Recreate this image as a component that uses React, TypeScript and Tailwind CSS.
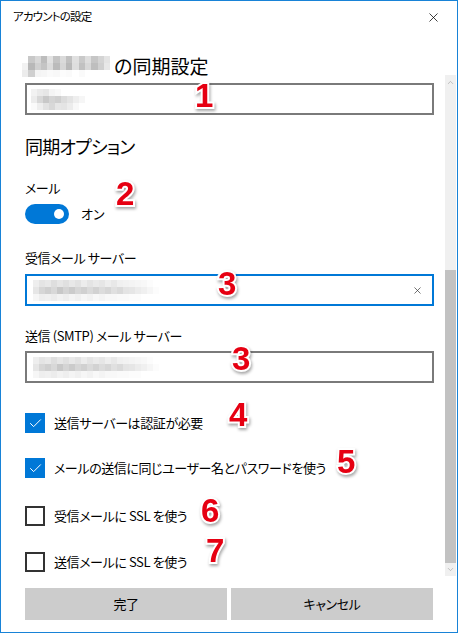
import { X, Check, ChevronUp, ChevronDown } from 'lucide-react';

const font = { fontFamily: '"Segoe UI", "Noto Sans CJK JP", "Noto Sans", sans-serif' };

// pixelated blur standing in for the hidden account text
function Mosaic({ cells, size = 6 }: { cells: string[][]; size?: number }) {
  return (
    <div className="flex flex-col blur-[0.6px]">
      {cells.map((row, i) => (
        <div key={i} className="flex">
          {row.map((c, j) => (
            <div key={j} style={{ backgroundColor: c, width: size, height: 7 }} />
          ))}
        </div>
      ))}
    </div>
  );
}

const headCells = [
  ['#fff', '#c8c8c8', '#d8d8d8', '#bdbdbd', '#e2e2e2', '#c4c4c4', '#dadada', '#c0c0c0', '#e0e0e0', '#c9c9c9', '#dedede', '#c6c6c6', '#d4d4d4', '#e4e4e4'],
  ['#f2f2f2', '#b8b8b8', '#d0d0d0', '#c4c4c4', '#dcdcdc', '#bbbbbb', '#d6d6d6', '#b9b9b9', '#dedede', '#c1c1c1', '#d8d8d8', '#bebebe', '#d0d0d0', '#e8e8e8'],
  ['#ececec', '#cfcfcf', '#f4f4f4', '#f6f6f6', '#fafafa', '#f8f8f8', '#fcfcfc', '#fafafa', '#fff', '#fafafa', '#fff', '#fff', '#fff', '#fff'],
];

const input1Cells = [
  ['#f2f2f2', '#eaeaea', '#e6e6e6', '#f4f4f4', '#f8f8f8', '#fff', '#fff', '#fff', '#fff', '#fff', '#fff'],
  ['#ececec', '#d8d8d8', '#c8c8c8', '#d4d4d4', '#cfcfcf', '#dcdcdc', '#e4e4e4', '#eeeeee', '#f6f6f6', '#fff', '#fff'],
  ['#fafafa', '#eeeeee', '#e2e2e2', '#d8d8d8', '#e6e6e6', '#e4e4e4', '#ececec', '#f8f8f8', '#fff', '#fff', '#fff'],
];

const serverCells = [
  ['#eeeeee', '#e4e4e4', '#e8e8e8', '#dedede', '#e6e6e6', '#e0e0e0', '#e8e8e8', '#e2e2e2', '#ececec', '#e4e4e4', '#eaeaea', '#e6e6e6', '#eeeeee', '#e8e8e8', '#f0f0f0', '#f2f2f2', '#f4f4f4', '#f6f6f6', '#f8f8f8', '#fcfcfc', '#fff'],
  ['#e6e6e6', '#d6d6d6', '#cfcfcf', '#d8d8d8', '#c8c8c8', '#d4d4d4', '#cbcbcb', '#d6d6d6', '#d0d0d0', '#dadada', '#d2d2d2', '#dcdcdc', '#d6d6d6', '#e0e0e0', '#dadada', '#e4e4e4', '#e6e6e6', '#ececec', '#f0f0f0', '#f6f6f6', '#fcfcfc'],
  ['#f6f6f6', '#eeeeee', '#f0f0f0', '#ececec', '#f2f2f2', '#eeeeee', '#f4f4f4', '#f0f0f0', '#f6f6f6', '#f2f2f2', '#f8f8f8', '#f4f4f4', '#f8f8f8', '#f8f8f8', '#fafafa', '#fafafa', '#fcfcfc', '#fcfcfc', '#fff', '#fff', '#fff'],
];

function Badge({ n, className }: { n: string; className: string }) {
  return (
    <span
      className={`absolute text-[33px] leading-none font-bold text-[#e60012] [-webkit-text-stroke:4px_#fff] [paint-order:stroke_fill] drop-shadow-[1px_2px_1.5px_rgba(0,0,0,0.35)] ${className}`}
      style={{ fontFamily: '"Liberation Sans", Arial, sans-serif' }}
    >
      {n}
    </span>
  );
}

function CheckRow({ checked, label, className }: { checked: boolean; label: string; className: string }) {
  return (
    <div className={`flex items-center h-[20px] ${className}`}>
      {checked ? (
        <div className="w-[20px] h-[20px] bg-[#0078d7] flex items-center justify-center">
          <Check size={15} strokeWidth={1.6} className="text-white" />
        </div>
      ) : (
        <div className="w-[20px] h-[20px] border-2 border-[#333333]" />
      )}
      <span className="ml-[9px] text-[13px] tracking-[-0.4px] text-black">{label}</span>
    </div>
  );
}

export default function App() {
  return (
    <div
      className="relative w-[458px] h-[633px] bg-white border border-[#1883d7] flex flex-col overflow-hidden [font-feature-settings:'palt']"
      style={font}
    >
      {/* title bar */}
      <div className="h-[32px] flex items-center justify-between pl-[12px] pr-[16px] shrink-0">
        <span className="text-[11.5px] tracking-[-0.8px] text-black">アカウントの設定</span>
        <X size={15} strokeWidth={1.2} className="text-black" />
      </div>

      <div className="flex flex-1 min-h-0">
        <div className="flex-1 flex flex-col pl-[24px] pr-[11px]">
          <div className="mt-[19px] h-[28px] flex items-center">
            <div className="-ml-[3px] mr-[4px]">
              <Mosaic cells={headCells} size={6.3} />
            </div>
            <span className="text-[19px] text-black">の同期設定</span>
          </div>

          <div className="mt-[3px] h-[32px] border-2 border-[#7a7a7a] flex items-center pl-[4px]">
            <Mosaic cells={input1Cells} />
          </div>

          <div className="mt-[17px] h-[28px] flex items-center text-[18px] tracking-[-0.8px] text-black">同期オプション</div>

          <div className="mt-[18px] h-[20px] flex items-center text-[13px] tracking-[-0.4px] text-black">メール</div>

          <div className="mt-[6px] h-[20px] flex items-center">
            <div className="w-[44px] h-[20px] rounded-full bg-[#0078d7] flex items-center justify-end pr-[5px]">
              <div className="w-[10px] h-[10px] rounded-full bg-white" />
            </div>
            <span className="ml-[12px] text-[13px] text-black">オン</span>
          </div>

          <div className="mt-[24px] h-[20px] flex items-center text-[13px] tracking-[-0.4px] text-black">受信メール サーバー</div>

          <div className="mt-[6px] h-[32px] border-2 border-[#0078d7] flex items-center justify-between pl-[6px] pr-[9px]">
            <Mosaic cells={serverCells} />
            <X size={11} strokeWidth={1.5} className="text-[#333]" />
          </div>

          <div className="mt-[20px] h-[20px] flex items-center text-[13px] tracking-[-0.4px] text-black">送信 (SMTP) メール サーバー</div>

          <div className="mt-[5px] h-[32px] border-2 border-[#7a7a7a] flex items-center pl-[6px]">
            <Mosaic cells={serverCells} />
          </div>

          <CheckRow checked label="送信サーバーは認証が必要" className="mt-[30px]" />
          <CheckRow checked label="メールの送信に同じユーザー名とパスワードを使う" className="mt-[25px]" />
          <CheckRow checked={false} label="受信メールに SSL を使う" className="mt-[28px]" />
          <CheckRow checked={false} label="送信メールに SSL を使う" className="mt-[26px]" />
        </div>

        {/* scrollbar */}
        <div className="w-[11px] mr-[1px] mt-[42px] mb-[1px] bg-[#f0f0f0] flex flex-col items-center">
          <ChevronUp size={9} strokeWidth={1.5} className="text-[#9a9a9a] mt-[3px]" />
          <div className="w-full mt-[183px] flex-1 bg-[#c2c2c2]" />
          <ChevronDown size={9} strokeWidth={1.5} className="text-[#9a9a9a] my-[2px]" />
        </div>
      </div>

      {/* buttons */}
      <div className="shrink-0 flex gap-[4px] pl-[24px] pr-[24px] pt-[11px] pb-[12px]">
        <button className="flex-1 h-[32px] bg-[#cccccc] text-[13px] tracking-[-0.4px] text-black">完了</button>
        <button className="flex-1 h-[32px] bg-[#cccccc] text-[13px] tracking-[-0.4px] text-black">キャンセル</button>
      </div>

      <Badge n="1" className="left-[194px] top-[78px]" />
      <Badge n="2" className="left-[115px] top-[176px]" />
      <Badge n="3" className="left-[217px] top-[266px]" />
      <Badge n="3" className="left-[231px] top-[341px]" />
      <Badge n="4" className="left-[228px] top-[397px]" />
      <Badge n="5" className="left-[336px] top-[444px]" />
      <Badge n="6" className="left-[200px] top-[493px]" />
      <Badge n="7" className="left-[205px] top-[533px]" />
    </div>
  );
}
